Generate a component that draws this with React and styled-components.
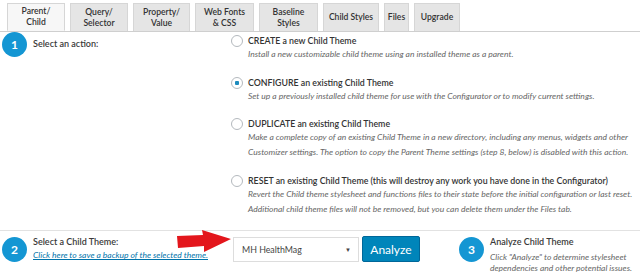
import React from "react";
import styled, { createGlobalStyle } from "styled-components";

const Global = createGlobalStyle`
  body {
    margin: 0;
    background: #fff;
    font-family: Lato, "Open Sans", sans-serif;
    color: #32373c;
  }
`;

const tabs = [
  { label: ["Parent/", "Child"], w: 58, active: true },
  { label: ["Query/", "Selector"], w: 58 },
  { label: ["Property/", "Value"], w: 57 },
  { label: ["Web Fonts", "& CSS"], w: 59 },
  { label: ["Baseline", "Styles"], w: 59 },
  { label: ["Child Styles"], w: 56 },
  { label: ["Files"], w: 25 },
  { label: ["Upgrade"], w: 46 },
];

const actions = [
  {
    title: "CREATE a new Child Theme",
    desc: ["Install a new customizable child theme using an installed theme as a parent."],
  },
  {
    title: "CONFIGURE an existing Child Theme",
    desc: ["Set up a previously installed child theme for use with the Configurator or to modify current settings."],
    checked: true,
  },
  {
    title: "DUPLICATE an existing Child Theme",
    desc: [
      "Make a complete copy of an existing Child Theme in a new directory, including any menus, widgets and other",
      "Customizer settings. The option to copy the Parent Theme settings (step 8, below) is disabled with this action.",
    ],
  },
  {
    title: "RESET an existing Child Theme (this will destroy any work you have done in the Configurator)",
    desc: [
      "Revert the Child theme stylesheet and functions files to their state before the initial configuration or last reset.",
      "Additional child theme files will not be removed, but you can delete them under the Files tab.",
    ],
  },
];

const App = () => {
  return (
    <Page>
      <Global />
      <TabBar>
        {tabs.map((t, i) => (
          <Tab key={i} $active={t.active} $w={t.w}>
            {t.label.map((l, j) => (
              <span key={j}>{l}</span>
            ))}
          </Tab>
        ))}
      </TabBar>

      <ActionSection>
        <StepHead>
          <Num>1</Num>
          <StepTitle $top={6}>Select an action:</StepTitle>
        </StepHead>
        <Options>
          {actions.map((a, i) => (
            <Option key={i}>
              <Radio $checked={a.checked} />
              <OptionBody>
                <OptionTitle>{a.title}</OptionTitle>
                {a.desc.map((d, j) => (
                  <Desc key={j}>{d}</Desc>
                ))}
              </OptionBody>
            </Option>
          ))}
        </Options>
      </ActionSection>

      <BottomRow>
        <StepHead>
          <Num $top={1}>2</Num>
          <div>
            <StepTitle>Select a Child Theme:</StepTitle>
            <BackupLink href="#">Click here to save a backup of the selected theme.</BackupLink>
          </div>
        </StepHead>
        <SelectWrap>
          <Arrow width="56" height="24" viewBox="0 0 56 24">
            <polygon points="0,6 26,5 25,0 54,9 27,22 27,16 1,18" fill="#e3161c" />
          </Arrow>
          <Select>
            <span>MH HealthMag</span>
            <Caret>▼</Caret>
          </Select>
          <Button>Analyze</Button>
        </SelectWrap>
        <StepThree>
          <Num $top={1}>3</Num>
          <div>
            <StepTitle>Analyze Child Theme</StepTitle>
            <SmallDesc>
              Click "Analyze" to determine stylesheet
              <br />
              dependencies and other potential issues.
            </SmallDesc>
          </div>
        </StepThree>
      </BottomRow>
    </Page>
  );
};

const Page = styled.div`
  width: 640px;
  height: 274px;
  overflow: hidden;
`;

const TabBar = styled.div`
  display: flex;
  gap: 5px;
  padding: 3px 0 0 7px;
  border-bottom: 1px solid #cfcfcf;
  height: 28px;
`;

const Tab = styled.div`
  width: ${(p) => p.$w}px;
  height: 28px;
  box-sizing: border-box;
  display: flex;
  flex-direction: column;
  justify-content: center;
  align-items: center;
  background: ${(p) => (p.$active ? "#f7f7f7" : "#e5e5e5")};
  border: 1px solid #d6d6d6;
  border-bottom: ${(p) => (p.$active ? "1px solid #f7f7f7" : "none")};
  font-size: 8.6px;
  font-weight: 600;
  line-height: 11px;
  color: #333;
  white-space: nowrap;
`;

const ActionSection = styled.div`
  display: flex;
  height: 198px;
`;

const StepHead = styled.div`
  display: flex;
  align-items: flex-start;
  gap: 6px;
  padding-left: 2px;
  width: 229px;
`;

const Num = styled.div`
  width: 25px;
  height: 25px;
  flex: none;
  border-radius: 50%;
  background: #1496d3;
  color: #fff;
  font-weight: 700;
  font-size: 12px;
  display: flex;
  align-items: center;
  justify-content: center;
  margin-top: ${(p) => p.$top || 0}px;
`;

const StepTitle = styled.div`
  font-size: 9px;
  font-weight: 600;
  color: #3a3a3a;
  line-height: 12px;
  margin-top: ${(p) => p.$top || 0}px;
`;

const Options = styled.div`
  display: flex;
  flex-direction: column;
  gap: 13.5px;
  padding-top: 2px;
`;

const Option = styled.div`
  display: flex;
  gap: 5px;
`;

const Radio = styled.div`
  width: 10px;
  height: 10px;
  border-radius: 50%;
  border: 1px solid #b4b9be;
  flex: none;
  margin-top: 1px;
  background: ${(p) =>
    p.$checked ? "radial-gradient(circle, #1e8cbe 0 2px, #fff 2.5px)" : "#fff"};
`;

const OptionBody = styled.div`
  display: flex;
  flex-direction: column;
`;

const OptionTitle = styled.div`
  font-size: 8.8px;
  font-weight: 600;
  line-height: 13px;
  color: #333;
`;

const Desc = styled.div`
  font-size: 8.5px;
  font-style: italic;
  line-height: 15px;
  color: #666;
  white-space: nowrap;
`;

const BottomRow = styled.div`
  border-top: 1px solid #e2e2e2;
  display: flex;
  padding-top: 5px;
`;

const BackupLink = styled.a`
  display: block;
  font-size: 8.5px;
  font-style: italic;
  color: #0073aa;
  line-height: 15px;
  white-space: nowrap;
`;

const SelectWrap = styled.div`
  position: relative;
  display: flex;
  gap: 3px;
  margin-left: 2px;
  padding-top: 1px;
`;

const Arrow = styled.svg`
  position: absolute;
  left: -56px;
  top: -6px;
`;

const Select = styled.div`
  width: 126px;
  height: 25px;
  box-sizing: border-box;
  border: 1px solid #ddd;
  display: flex;
  align-items: center;
  justify-content: space-between;
  padding: 0 7px 0 8px;
  font-size: 8.8px;
  color: #444;
`;

const Caret = styled.span`
  font-size: 6px;
  color: #444;
`;

const Button = styled.div`
  width: 58px;
  height: 26px;
  box-sizing: border-box;
  margin-top: -1px;
  background: #0085ba;
  border: 1px solid #006799;
  border-radius: 2px;
  color: #fff;
  font-size: 12px;
  display: flex;
  align-items: center;
  justify-content: center;
`;

const StepThree = styled.div`
  display: flex;
  gap: 6px;
  margin-left: 39px;
`;

const SmallDesc = styled.div`
  margin-top: 4px;
  font-size: 8.5px;
  font-style: italic;
  line-height: 11px;
  color: #666;
  white-space: nowrap;
`;

export default App;
